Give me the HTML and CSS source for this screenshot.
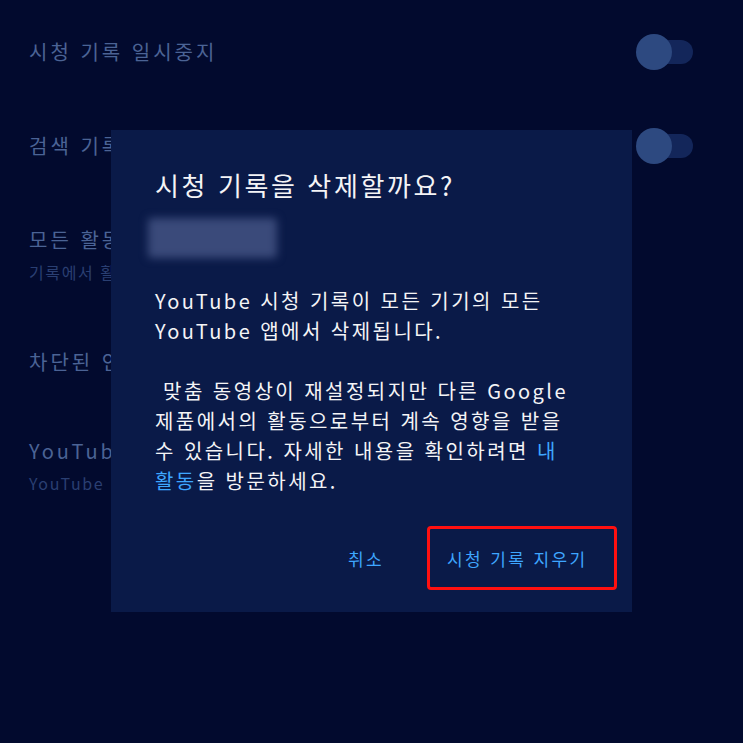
FILE: index.html
```html
<!DOCTYPE html>
<html lang="ko">
<head>
<meta charset="utf-8">
<link rel="stylesheet" href="styles.css">
</head>
<body>
<div class="screen">
  <ul class="settings">
    <li class="row r1">
      <div class="texts"><div class="label">시청 기록 일시중지</div></div>
      <div class="toggle"><span class="knob"></span></div>
    </li>
    <li class="row r2">
      <div class="texts"><div class="label">검색 기록 일시중지</div></div>
      <div class="toggle"><span class="knob"></span></div>
    </li>
    <li class="row r3">
      <div class="texts"><div class="label">모든 활동 관리</div><div class="sub">기록에서 활동 삭제</div></div>
    </li>
    <li class="row r4">
      <div class="texts"><div class="label">차단된 인물</div></div>
    </li>
    <li class="row r5">
      <div class="texts clip"><div class="label">YouTube</div><div class="sub">YouTube</div></div>
    </li>
  </ul>

  <div class="dialog">
    <h1 class="title">시청 기록을 삭제할까요?</h1>
    <div class="account"></div>
    <p class="body">
      <span class="line">YouTube 시청 기록이 모든 기기의 모든</span>
      <span class="line">YouTube 앱에서 삭제됩니다.</span>
    </p>
    <p class="body p2">
      <span class="line">&nbsp;맞춤 동영상이 재설정되지만 다른 Google</span>
      <span class="line">제품에서의 활동으로부터 계속 영향을 받을</span>
      <span class="line">수 있습니다. 자세한 내용을 확인하려면 <span class="link">내</span></span>
      <span class="line"><span class="link">활동</span>을 방문하세요.</span>
    </p>
    <div class="actions">
      <button class="btn">취소</button>
      <button class="btn btn-main">시청 기록 지우기</button>
    </div>
  </div>
</div>
</body>
</html>
```

FILE: styles.css
```css
* { box-sizing: border-box; }
html, body {
  margin: 0;
  padding: 0;
  background: #020a2e;
}
body {
  font-family: "Noto Sans CJK KR", "Noto Sans", sans-serif;
  width: 743px;
  height: 743px;
  overflow: hidden;
}
.screen {
  position: relative;
  width: 743px;
  height: 743px;
  background: #020a2e;
}
.settings {
  list-style: none;
  margin: 0;
  padding: 5px 50px 0 29px;
  display: flex;
  flex-direction: column;
}
.row {
  display: flex;
  align-items: center;
  justify-content: space-between;
}
.r1 { height: 94px; }
.r2 { height: 94px; }
.r3 { height: 126px; }
.r4 { height: 86px; }
.r5 { height: 124px; }
.clip {
  white-space: nowrap;
}
.label {
  color: #4b6395;
  font-size: 20px;
  letter-spacing: 3px;
  line-height: 30px;
}
.sub {
  color: #2a3f72;
  font-size: 16px;
  letter-spacing: 1.6px;
  line-height: 30px;
  margin-top: 2px;
}
.toggle {
  position: relative;
  width: 57px;
  height: 36px;
  display: flex;
  align-items: center;
}
.toggle::before {
  content: "";
  position: absolute;
  left: 18px;
  right: 0;
  top: 6px;
  height: 24px;
  border-radius: 12px;
  background: #13265a;
}
.knob {
  position: relative;
  width: 36px;
  height: 36px;
  border-radius: 50%;
  background: #2d4980;
}
.dialog {
  position: absolute;
  left: 111px;
  top: 130px;
  width: 521px;
  height: 482px;
  background: #0a1a48;
  padding: 38px 15px 0 44px;
  display: flex;
  flex-direction: column;
}
.title {
  margin: 0;
  color: #f4f4f6;
  font-weight: 400;
  font-size: 26px;
  letter-spacing: 2.6px;
  line-height: 34px;
}
.account {
  width: 129px;
  height: 40px;
  margin: 16px 0 0 -7px;
  background: #3a4a7a;
  filter: blur(4px);
  border-radius: 4px;
}
.body {
  margin: 28px 0 0 0;
  color: #f4f4f6;
  font-size: 20px;
  letter-spacing: 2.45px;
  line-height: 30px;
}
.line {
  display: block;
  height: 30px;
  white-space: nowrap;
}
.p2 { margin-top: 30px; }
.link { color: #3ea6ff; }
.actions {
  margin-top: 30px;
  display: flex;
  justify-content: flex-end;
  align-items: center;
  gap: 20px;
}
.btn {
  font-family: inherit;
  background: transparent;
  border: 3px solid transparent;
  color: #3ea6ff;
  font-size: 17px;
  letter-spacing: 2.4px;
  padding: 0 20px;
  height: 64px;
  cursor: pointer;
}
.btn-main {
  border-color: #ff1010;
  border-radius: 4px;
  width: 190px;
  padding: 0 0 0 17px;
  text-align: left;
}
```
